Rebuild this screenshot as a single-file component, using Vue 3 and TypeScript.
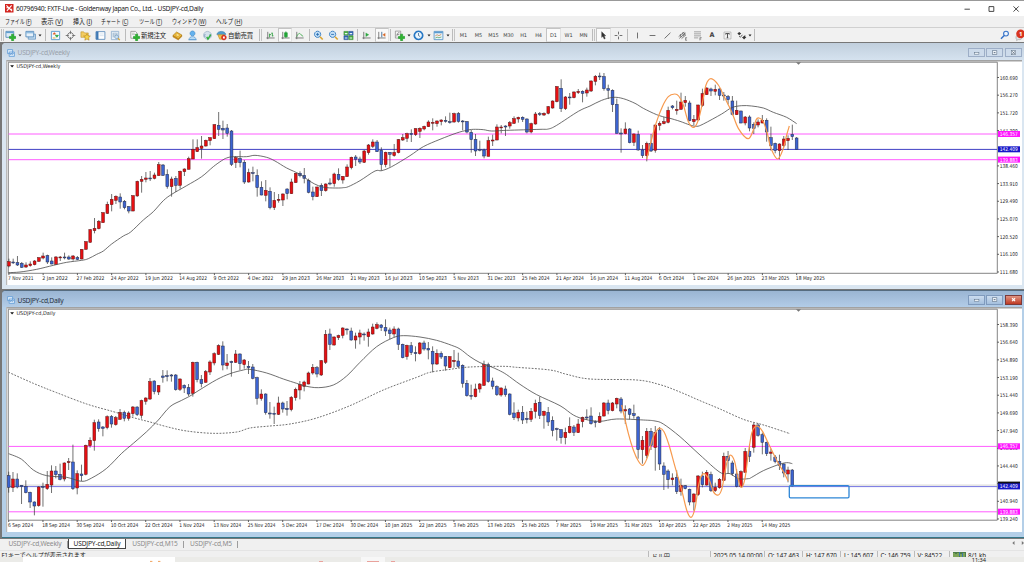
<script setup lang="ts">
type Shape = [d: string, fill: string, stroke?: string, width?: number]
type Point = [number, number]

interface Candle {
  x: number
  up: boolean
  top: number
  height: number
  high: number
  low: number
}

interface Chart {
  id: string
  title: string
  active: boolean
  top: number
  bottom: number
  height: number
  candles: Candle[]
  lines: { y: number; kind: string }[]
  average: string
  slow: string
  wave: string
  prices: { y: number; text: string }[]
  tags: { y: number; text: string; kind: string }[]
  dates: { x: number; text: string; w: number }[]
}

/* Candle rows: colour, body top, body bottom, high, low, in thirds of a pixel below the chart base. */
const weeklyRows = `r575,588,566,592 b576,578,566,582 b578,585,558,588 b580,592,576,594 r585,591,577,594 r582,587,574,590 r573,584,570,586 r563,574,562,575 r558,564,548,568 b557,576,554,582 b573,582,562,583 r561,583,558,584 r561,563,558,573 b561,563,548,568 b561,567,556,570 r558,567,555,572 b563,568,558,570 r538,567,537,568 r515,538,514,539 r479,517,477,518 r475,482,444,490 r454,476,450,478 r428,458,427,458 r403,430,395,432 r388,404,372,424 r379,391,376,402 b381,396,370,416 b394,413,390,418 b410,423,408,430 r377,423,376,424 r334,378,332,380 r328,334,318,368 r324,328,306,337 b324,326,303,333 r315,325,308,328 r284,317,276,317 b285,316,282,318 b313,350,298,356 r327,350,320,380 b325,346,318,366 r304,346,302,356 r297,305,295,318 r266,298,260,298 r238,267,208,267 r233,245,208,246 r228,235,198,266 r211,228,209,230 r203,212,202,226 r164,206,163,207 b166,178,126,198 b175,180,152,207 b174,190,162,200 b183,283,180,288 r263,278,258,294 b265,278,242,292 b277,336,270,342 r308,336,296,338 b308,310,290,334 b316,353,298,380 b352,375,334,376 r361,376,330,394 b364,413,352,418 r391,413,366,420 r388,391,372,398 r372,390,370,408 b357,371,355,388 r336,371,326,372 r310,338,309,338 b310,317,304,322 b316,325,294,340 b331,367,326,370 b366,380,350,391 r351,380,350,381 b346,362,340,378 r342,362,340,365 b339,342,325,346 r312,341,308,350 b313,328,295,332 r319,330,318,341 r291,320,283,320 r262,293,260,298 b261,268,255,288 b267,276,260,282 r243,277,240,279 r225,248,222,254 r216,229,208,234 b216,245,210,246 b241,284,232,302 r247,284,245,292 b247,253,246,290 r247,257,222,260 r209,248,207,250 r203,210,192,213 r191,205,188,216 b190,194,178,216 r176,194,175,198 r175,184,172,204 r169,177,167,181 r156,170,151,171 r157,159,145,181 r153,161,151,170 r150,155,148,166 b151,154,139,158 b155,157,128,161 r131,156,128,158 b131,154,126,158 b153,155,150,181 b155,186,153,190 b187,209,180,248 b208,243,192,258 b238,241,212,244 b240,258,236,265 r212,259,200,259 r210,213,194,228 r171,210,163,211 r171,173,165,190 b168,171,166,198 r158,168,153,176 r146,160,139,162 r142,147,140,158 b142,148,139,156 b147,186,145,190 r161,186,158,190 r132,162,126,164 b131,133,126,138 r130,135,127,138 r110,130,108,133 r93,114,91,116 r50,95,48,97 b55,116,28,126 r81,116,78,120 b81,83,69,104 r66,83,64,85 r64,68,57,72 b64,70,61,97 r60,69,53,80 r33,63,31,66 r19,34,15,46 b18,20,8,30 b20,56,9,62 b56,61,44,87 b61,104,58,126 b103,190,86,191 b189,192,175,248 r177,191,157,193 b177,218,174,220 r192,217,190,228 b193,240,182,242 b240,257,225,264 r220,257,215,274 b220,243,192,246 r165,241,163,248 r160,166,154,181 r155,161,141,163 r121,157,110,160 b108,113,105,118 r118,122,92,134 r96,118,68,119 r91,98,78,110 b99,152,92,154 r148,155,135,166 r105,150,104,151 r71,106,56,110 r54,74,52,75 b57,63,53,78 r58,64,44,76 b57,76,55,90 b75,78,66,92 b80,89,75,103 b93,133,78,136 r121,134,92,135 b123,159,122,160 r141,159,138,166 b141,174,136,184 b163,175,157,192 r156,165,148,172 r151,159,135,160 b151,186,145,215 b203,227,170,242 b220,242,218,250 r222,242,220,268 r207,227,198,232 r205,212,196,240 b193,200,164,210 b204,239,201,240`

const dailyRows = `b557,592,545,608 r567,593,546,606 b567,591,550,595 b586,590,585,642 b590,608,571,610 b607,636,605,654 b636,648,634,676 r591,647,589,650 b590,592,578,650 r583,596,543,600 r543,585,526,609 b543,554,528,565 b553,568,521,571 r519,567,517,574 r515,518,504,540 b516,596,464,600 r551,594,541,613 b552,557,524,573 r466,553,464,556 r451,467,442,473 r398,452,389,482 b396,416,388,425 b411,415,408,439 r380,413,376,418 b380,402,375,413 r383,404,378,407 r367,388,357,389 b367,385,362,394 r369,385,364,392 r351,371,348,380 b351,374,349,378 r332,376,329,386 r324,334,322,344 r275,327,264,330 b273,305,271,313 r287,306,285,315 b258,262,240,278 b257,260,241,274 b255,258,252,275 b255,299,252,302 r267,298,265,303 b286,294,283,309 b293,312,282,318 r217,310,215,320 b217,269,215,277 b269,281,255,292 r245,277,240,278 r216,246,211,255 r191,219,187,226 r167,193,163,195 b168,225,154,241 r219,227,192,238 b215,218,212,260 r192,217,180,219 b192,221,190,240 r210,224,207,236 b229,233,213,252 b231,265,222,268 b263,325,260,344 r312,326,298,332 b312,368,310,374 b369,372,336,386 b370,372,350,402 r339,373,320,375 b339,357,335,368 b355,359,333,377 r322,359,318,364 r298,323,293,332 r284,300,273,328 r276,289,272,304 r249,282,245,283 r232,249,222,254 b233,252,228,262 r212,255,210,258 r133,217,120,222 b132,163,116,180 r141,165,139,167 r137,143,134,150 r114,136,112,145 b117,119,115,134 b123,150,113,152 r138,150,128,176 r129,141,119,163 b132,134,127,152 r126,140,116,170 r111,132,101,134 r104,115,97,118 b105,113,102,123 b113,123,88,138 b120,131,113,148 r117,132,109,142 b117,163,113,180 b163,203,161,205 r166,200,164,209 b167,188,156,195 b188,191,169,214 r159,191,156,194 b159,177,152,182 b175,180,156,208 b184,222,169,247 r190,222,178,225 b190,201,184,207 b200,228,198,242 r200,233,199,234 r211,215,180,233 b213,229,188,234 b226,280,223,293 b280,317,270,320 b316,319,284,329 r297,320,281,322 r282,297,279,308 r224,286,212,288 b224,275,218,278 b273,289,263,298 b290,314,286,318 r294,315,292,320 b297,314,287,320 b312,373,310,376 b369,383,337,390 r367,384,359,394 b367,390,348,402 b385,389,365,400 r364,388,354,396 r340,364,329,385 b337,376,320,387 r364,376,362,416 b367,396,351,408 b391,421,379,439 b416,419,413,452 b419,443,418,461 r427,443,413,463 r409,428,382,430 b411,427,405,438 r402,428,387,429 r382,395,380,412 b381,384,358,390 b378,401,352,404 b395,398,391,412 r379,397,367,399 r339,378,336,380 b339,362,329,373 r339,362,336,364 r325,342,323,355 b327,363,321,370 r359,363,346,402 b357,373,354,388 b371,377,344,386 b381,479,378,506 r451,479,438,521 r424,496,414,505 b424,467,414,480 r427,473,408,542 b420,522,411,540 b528,553,517,600 b543,569,538,596 r564,569,550,586 b563,605,541,612 r586,605,566,617 b587,596,585,598 b598,636,596,646 r612,636,610,662 r558,614,555,618 b558,584,545,592 r547,585,540,587 b554,602,545,606 r592,602,578,606 r568,593,564,596 r499,571,488,573 b499,512,483,552 b519,551,512,558 b552,589,537,592 r545,589,541,592 r484,547,474,548 b484,499,463,516 r405,472,399,488 b405,436,400,440 b434,457,428,493 b457,491,455,498 r486,490,476,512 b501,515,495,520 b515,526,494,540 b522,549,520,562 r540,552,530,577 b540,588,537,589`

function candles(rows: string, base: number, x0: number, step: number): Candle[] {
  return rows.split(' ').map((row, i) => {
    const [a, b, h, l] = row.slice(1).split(',').map((n) => base + Number(n) / 3)
    return { x: x0 + i * step, up: row[0] === 'r', top: a, height: Math.max(b - a, 0.9), high: h, low: l }
  })
}

/* Smooth curve through the points; each segment string is "xOffset|x,y x,y ...". */
function curve(base: number, ...parts: string[]): string {
  const pts: Point[] = parts.flatMap((part) => {
    const [off, list] = part.split('|')
    return list.split(' ').map((p) => {
      const [x, y] = p.split(',').map(Number)
      return [(Number(off) + x) / 3, base + y / 3] as Point
    })
  })
  let d = `M${pts[0][0]} ${pts[0][1]}`
  for (let i = 0; i < pts.length - 1; i++) {
    const p0 = pts[Math.max(i - 1, 0)]
    const p1 = pts[i]
    const p2 = pts[i + 1]
    const p3 = pts[Math.min(i + 2, pts.length - 1)]
    d += `C${p1[0] + (p2[0] - p0[0]) / 6} ${p1[1] + (p2[1] - p0[1]) / 6} ${p2[0] - (p3[0] - p1[0]) / 6} ${p2[1] - (p3[1] - p1[1]) / 6} ${p2[0]} ${p2[1]}`
  }
  return d
}

function prices(list: string, y0: number, step: number) {
  return list.split(' ').map((text, i) => ({ text, y: y0 + i * step })).filter((p) => p.text !== '-')
}

function dates(list: string, x0: number) {
  return list.split(',').map((text, i) => {
    const w = text.length > 10 ? (text.includes('May') ? 29 : 27.8) : 25.4
    return { text, x: x0 + i * 34.25, w }
  })
}

const charts: Chart[] = [
  {
    id: 'weekly',
    title: 'USDJPY-cd,Weekly',
    active: false,
    top: 60,
    bottom: 273.3,
    height: 225,
    candles: candles(weeklyRows, 70, 8.9, 4.281),
    lines: [
      { y: 134, kind: 'magenta' },
      { y: 149.4, kind: 'navy' },
      { y: 159.7, kind: 'magenta' },
    ],
    average: curve(
      70,
      '0|25,608 60,606 110,598 160,586 200,577 245,571 265,566 290,553 310,543 335,522 370,498 392,486 430,450 460,425 490,392 515,373 560,347 605,320 640,290 665,272 680,264 700,260 740,260 765,256 800,262 825,273 860,294 900,313 930,334 955,347 980,353 1015,354',
      '1020|10,353 25,350 60,332 105,303 125,302 155,290 210,257 250,230 300,208 350,189 380,181 400,178 430,179 455,183 500,181 600,178 625,177 650,166 715,124 750,108 785,91 820,82 850,86 885,100 910,115 950,134 980,143',
      '2010|0,145 30,154 60,165 80,169 100,162 155,132 185,113 215,107 245,108 280,114 310,127 350,142 380,161',
    ),
    slow: '',
    wave: curve(
      70,
      '1020|920,268 933,215 948,160 967,110 985,80 1004,72',
      '2010|26,78 40,105 55,155 72,172 85,150 97,100 108,45 123,26 145,45 165,85 185,125 205,175 234,206 250,180 258,150 267,144 280,155 292,190 303,235 323,267 340,235 350,195 358,168',
    ),
    prices: prices('160.690 156.270 151.720 147.300 - 138.460 133.910 129.490 125.070 120.520 116.100 111.680', 77.5, 17.68),
    tags: [
      { y: 134, text: '146.357', kind: 'magenta' },
      { y: 149.3, text: '142.409', kind: 'navy' },
      { y: 159.6, text: '139.883', kind: 'magenta' },
    ],
    dates: dates('7 Nov 2021,2 Jan 2022,27 Feb 2022,24 Apr 2022,19 Jun 2022,14 Aug 2022,9 Oct 2022,4 Dec 2022,29 Jan 2023,26 Mar 2023,21 May 2023,16 Jul 2023,10 Sep 2023,5 Nov 2023,31 Dec 2023,25 Feb 2024,21 Apr 2024,16 Jun 2024,11 Aug 2024,6 Oct 2024,1 Dec 2024,26 Jan 2025,23 Mar 2025,18 May 2025', 8.9),
  },
  {
    id: 'daily',
    title: 'USDJPY-cd,Daily',
    active: true,
    top: 307,
    bottom: 520.2,
    height: 225,
    candles: candles(dailyRows, 290, 8.7, 4.282),
    lines: [
      { y: 446.4, kind: 'magenta' },
      { y: 485.1, kind: 'bid' },
      { y: 486.6, kind: 'periwinkle' },
      { y: 511.8, kind: 'magenta' },
    ],
    average: curve(
      290,
      '0|26,491 65,508 100,540 140,557 200,562 245,574 275,564 320,535 365,490 400,460 440,425 475,390 510,350 545,331 570,318 600,299 650,269 690,251 730,240',
      '750|0,238 50,249 100,267 140,280 165,288 205,293 250,285 290,258 330,217 380,170 430,143 460,137 510,141 560,151 605,166 630,177 660,200 690,218 720,229 745,240',
      '1500|20,254 60,283 110,314 180,347 220,375 255,388 300,394 350,387 430,390 465,393 490,402 540,440 600,495 660,547 690,551 715,566 745,566',
      '2250|5,562 40,542 85,524 110,518 127,521',
    ),
    slow: curve(
      290,
      '0|26,247 100,280 170,308 260,342 340,365 400,383 450,396 500,410 560,423 640,430 710,426',
      '750|0,414 60,408 120,402 200,384 300,347 400,300 500,262 540,247 600,238 660,231 760,229',
      '1500|50,232 150,240 200,253 270,267 410,270 480,284 540,306 600,332 660,357 730,388',
      '2250|30,402 60,411 120,431',
    ),
    wave: curve(
      290,
      '1500|365,345 385,430 400,480 415,513 429,526 443,500 458,445 470,422 479,414 492,425 507,465 525,530 545,600 560,660 573,682 585,655 595,590 603,560 613,551 628,570 640,605 655,615 666,595 675,545 684,505 693,496 704,515 714,565 724,592 735,565 745,490 755,430 765,410',
      '2250|26,410 38,425 60,470 85,520 102,548 114,572',
    ),
    prices: prices('158.390 156.640 154.890 153.190 151.440 149.690 147.940 146.190 144.440 142.740 140.940 139.240', 324.5, 17.68),
    tags: [
      { y: 484.6, text: '', kind: 'black' },
      { y: 446.3, text: '146.357', kind: 'magenta' },
      { y: 486.4, text: '142.409', kind: 'navy' },
      { y: 511.7, text: '139.883', kind: 'magenta' },
    ],
    dates: dates('6 Sep 2024,18 Sep 2024,30 Sep 2024,10 Oct 2024,22 Oct 2024,1 Nov 2024,13 Nov 2024,25 Nov 2024,5 Dec 2024,17 Dec 2024,30 Dec 2024,10 Jan 2025,22 Jan 2025,3 Feb 2025,13 Feb 2025,25 Feb 2025,7 Mar 2025,19 Mar 2025,31 Mar 2025,10 Apr 2025,22 Apr 2025,2 May 2025,14 May 2025', 8.7),
  },
]

const G = '#555'
const axes = 'M3 2v8M1.5 8.7h9'
const plus = 'M7.2 4.6h2.2v2.4h2.3v2.2H9.4v2.4H7.2V9.2H4.9V7h2.3z'
const icons: Record<string, Shape[]> = {
  newChart: [['M1 1.5h8.5v6.5H1z', '#dcebf7', '#4c86b8', 0.9], ['M1.2 2.8h8', 'none', '#5f9fd0', 1.2], [plus, '#2fb52f', '#1f9a2a', 0.7]],
  profiles: [['M3.5 4.5h8v5.5h-8z', '#c4dcf0', '#5b8fbd', 0.8], ['M1 1.5h8.5v6H1z', '#e6f1fa', '#4c86b8', 0.9], ['M1.2 3h8', 'none', '#7db0da', 1.2]],
  market: [['M1.5 1.5h9v9h-9z', '#f4f9fd', '#5c9bcf', 1], ['M3.2 4.5l1.5-1.8 1.5 1.8z', '#e2571f', '#e2571f', 0.5], ['M5.8 5.8h3.4L7.5 8z', '#25a53a', '#25a53a', 0.7], ['M3 8.7h3', 'none', '#e2a01f', 0.9]],
  target: [['M6 2.8a3.2 3.2 0 1 0 .01 0z', 'none', '#666', 0.9], ['M6 .8v3.4M6 7.8v3.4M.8 6h3.4M7.8 6h3.4', 'none', '#666', 0.9]],
  favorites: [['M1 2h3l1 1.2h4V8H1z', '#f3cc62', '#b98b21', 0.6], ['M7.6 4l1.1 2.3 2.6.3-1.9 1.8.5 2.7-2.3-1.3-2.3 1.3.5-2.7-1.9-1.8 2.6-.3z', '#f6d34a', '#b27d14', 0.6]],
  navigator: [['M1.2 1.8h9.6v8.4H1.2z', '#fff', '#5486b8', 0.9], ['M1.3 2h2.2v8H1.3z', '#3f7ab5', '#3f7ab5', 0.5], ['M5 4.3h4.5M5 6.2h4.5', 'none', '#b9cfe4', 0.6]],
  tester: [['M1.5 1.5h8v9h-8z', '#eaf2f9', '#86a9c9', 0.8], ['M3.5 3v5M5.5 2.8v4M7.5 3v3', 'none', '#7a99b8', 0.8], ['M7.2 5.5a2 2 0 1 0 .01 0z', '#c9e3f6', '#6d8faf', 0.8], ['M8.7 9l2 2', 'none', '#d8a73a', 1.3]],
  order: [['M2 1.5h5l1.8 1.8V9H2z', '#fafafa', '#888', 0.8], ['M3.3 3.5h3M3.3 5h3.8', 'none', '#999', 0.6], [plus, '#2fb52f', '#1f9a2a', 0.7]],
  gold: [['M1 6l4-3.8 5.8 3.3L7 10z', '#edbb3a', '#a87514', 0.7], ['M3.5 5.5l2.5-1.6 2.5 1.5-2 1.8z', '#fbe18c', '#c58d1d', 0.5], ['M1 6v1.5l5.8 3.4 4-3.8V5.6L7 9.5z', '#c98d1f', '#a87514', 0.4]],
  cloud: [['M6 1a2.7 2.7 0 1 0 .01 0z', '#64b2ee', '#2f7dc1', 0.6], ['M2.2 10.5c0-4.4 7.6-4.4 7.6 0z', '#b7dbf6', '#3d86c7', 0.6], ['M1.5 10.6h9', 'none', '#5c9dd4', 0.9]],
  signal: [['M6 1.5a4.3 4.3 0 1 0 .01 0z', '#d5e1ec', '#90a8bf', 0.7], ['M3.4 4.4a3.5 3.5 0 0 0 0 3.6M8.6 4.4a3.5 3.5 0 0 1 0 3.6', 'none', '#6b8db0', 0.8], ['M5.2 7.5l1.3 2.5 3-5', 'none', '#2eaf3c', 1.5]],
  robot: [['M1 5c0-4.6 9.6-4.6 9.6 0z', '#4f9ccc', '#2d74a3', 0.6], ['M2 5.3h7L7 10H4z', '#f2c14a', '#b68321', 0.6], ['M8.6 5.5a2.7 2.7 0 1 0 .01 0z', '#e0301e', '#b51f12', 0.4], ['M7.6 7.2h2v2h-2z', '#fff']],
  bars: [[axes, 'none', G, 0.8], ['M5 4v4M5 5h1.5M8 3v4M6.8 3.5H8M8 6.3h1.2', 'none', '#249a38', 0.9]],
  candle: [[axes, 'none', G, 0.8], ['M5 3h2.9v4.4H5z', '#26b53b', '#1c9430', 0.7], ['M6.4 1.5v7', 'none', '#1c9430', 0.8]],
  line: [[axes, 'none', G, 0.8], ['M3 7.3c2-4.6 3.4-4 4.6-2.2L10 7', 'none', '#39a845', 0.9]],
  zoomIn: [['M5 1.3a3.4 3.4 0 1 0 .01 0z', '#c4e0f7', '#3b80c4', 1], ['M5 3.2v3.2M3.4 4.8h3.2', 'none', '#2267ac', 0.9], ['M7.6 7.4l3 3', 'none', '#dba633', 1.8]],
  zoomOut: [['M5 1.3a3.4 3.4 0 1 0 .01 0z', '#c4e0f7', '#3b80c4', 1], ['M3.4 4.8h3.2', 'none', '#2267ac', 0.9], ['M7.6 7.4l3 3', 'none', '#dba633', 1.8]],
  tiles: [['M1 1.5h4.7v4.2H1z', '#4bb144', '#2b7e2a', 0.5], ['M6.3 1.5H11v4.2H6.3z', '#3569b8', '#204a89', 0.5], ['M1 6.3h4.7v4.2H1z', '#3569b8', '#204a89', 0.5], ['M6.3 6.3H11v4.2H6.3z', '#4bb144', '#2b7e2a', 0.5], ['M2 3.9h2.8M7.2 3.9H10M2 8.8h2.8M7.2 8.8H10', 'none', '#e6f3f1', 1.2]],
  scroll: [[axes, 'none', G, 0.8], ['M5.3 3.2v4L8.5 5.2z', '#2aa53d', '#2aa53d', 0.4]],
  shift: [[axes, 'none', G, 0.8], ['M6.3 2v6', 'none', '#41719e', 1], ['M10 3.5v3.6L7.3 5.3z', '#d86a2a', '#d86a2a', 0.3]],
  indicators: [['M1.5 1.2h5.8v7.6H1.5z', '#f4f4f4', '#888', 0.8], ['M3 7c.8-4 1.8-4.5 3-4M3 4.8h2.8', 'none', '#666', 0.7], [plus, '#2fb52f', '#1f9a2a', 0.7]],
  clock: [['M6 1.4a4.5 4.5 0 1 0 .01 0z', '#eaf5fd', '#2777c4', 1.8], ['M6 3.3V6l1.8 1.2', 'none', '#31567d', 0.8]],
  template: [['M1.2 1.5h9.6v9H1.2z', '#eaf3fa', '#5492c6', 0.9], ['M1.3 2.7h9.4', 'none', '#5b9bd0', 1.7], ['M2.5 6.4l2-1.2 2 1 2.5-1.4', 'none', '#c47a3a', 0.8], ['M2.5 8.8l2-1 2 .7L9.2 7.6', 'none', '#4ea157', 0.8]],
  cursor: [['M4 1.8l4.5 4.6H6.7l1.2 2.9-1.2.6-1.3-3-1.4 1.2z', '#333', '#333', 0.4]],
  cross: [['M6 1.8v3M6 7.2v3M1.8 6h3M7.2 6h3', 'none', '#555', 0.9]],
  vline: [['M6 2.8v6.4', 'none', '#555', 0.9]],
  hline: [['M2.8 6h6.4', 'none', '#555', 0.9]],
  trend: [['M2.8 9.2l6.4-6.2', 'none', '#555', 0.9]],
  channel: [['M1.8 7.2l6-5M2.5 9.2l7-6M5 9.4l4.8-4.2M3.6 4.5l.8 3.4M6.2 2.7l.8 4M8 2.8l.6 3', 'none', '#555', 0.8], ['M11 8.3H9.3v3H11M9.3 9.8h1.4', 'none', '#555', 0.6]],
  fibo: [['M2.2 2h7.6M2.2 4.2h7.6M2.2 6.4h7.6M2.2 8.6h4.6', 'none', '#777', 0.7], ['M10.6 8.3H8.6v3M8.6 9.8h1.5', 'none', '#555', 0.6]],
  label: [['M2.2 2.2h7.6v7.6H2.2z', 'none', '#999', 0.6], ['M4 3.9h4v1M4 3.9v1M6 3.9v4.5M5.2 8.4h1.6', 'none', '#444', 1]],
  arrows: [['M3.5 2.2l2.2 1.7-2.2 1.7-2-1.7zM8 6.8l2.2-1v1.8h1.2L8.8 10.4 6.4 7.6H8z', '#333'], ['M3.3 6.5l1.5 1.4L7 5.2', 'none', '#444', 0.9]],
}

interface Tool {
  w: number
  kind: 'icon' | 'caret' | 'sep' | 'grip' | 'text' | 'cap' | 'letter'
  name?: string
  on?: boolean
}

const tools: Tool[] = `grip 4;icon 13 newChart;caret 5;icon 16 profiles;caret 4;sep 6;icon 15 market;icon 15 target;icon 15 favorites;icon 15 navigator;icon 15 tester;sep 4;icon 14 order;cap 28.5 新規注文;icon 15 gold;icon 15 cloud;icon 15 signal;icon 13.5 robot;cap 30 自動売買;grip 5;icon 15 bars;icon 14 candle on;icon 15 line;sep 4;icon 15 zoomIn;icon 15 zoomOut;icon 15 tiles;sep 3;icon 15.5 scroll;icon 14.5 shift on;sep 3;icon 14 indicators;caret 5;icon 15 clock;caret 5;icon 15 template;caret 4;grip 6;text 15 M1;text 15 M5;text 15 M15;text 15 M30;text 15 H1;text 15 H4;text 15 D1 on;text 15 W1;text 15 MN;grip 5;icon 15 cursor on;icon 15 cross;sep 3.5;icon 15 vline;icon 15 hline;icon 15 trend;icon 15 channel;icon 15 fibo;letter 15 A;icon 15 label;icon 13.5 arrows;caret 4;sep 5`
  .split(';')
  .map((entry) => {
    const [kind, w, name, on] = entry.split(' ')
    return { kind: kind as Tool['kind'], w: Number(w), name, on: on === 'on' }
  })

/* w is the slot in the bar, len the drawn length of the condensed label. */
const menus = [
  { text: 'ファイル', key: 'F', w: 36.3, len: 26.5 },
  { text: '表示', key: 'V', w: 32, len: 22 },
  { text: '挿入', key: 'I', w: 28.5, len: 19 },
  { text: 'チャート', key: 'C', w: 37.2, len: 27.3 },
  { text: 'ツール', key: 'T', w: 33, len: 23 },
  { text: 'ウィンドウ', key: 'W', w: 44, len: 34.3 },
  { text: 'ヘルプ', key: 'H', w: 30, len: 26.3 },
]

const tabs = [
  { text: 'USDJPY-cd,Weekly', w: 66, on: false },
  { text: 'USDJPY-cd,Daily', w: 58, on: true },
  { text: 'USDJPY-cd,M15', w: 58, on: false },
  { text: 'USDJPY-cd,M5', w: 54, on: false },
]

const status = [
  { text: 'ドル円', w: 62 },
  { text: '2025.05.14 00:00', w: 54.5 },
  { text: 'O: 147.463', w: 38 },
  { text: 'H: 147.670', w: 38 },
  { text: 'L: 145.607', w: 36.5 },
  { text: 'C: 146.759', w: 37 },
  { text: 'V: 84522', w: 35.5 },
]
</script>

<template>
  <div class="terminal">
    <header class="titlebar">
      <svg class="logo" viewBox="0 0 9 9">
        <rect width="9" height="9" fill="#d3241f" />
        <path d="M1.5 1.5l6 6M7 1.5L2 7.2M1.5 4h2.2M5.6 5.5h2" stroke="#fff" stroke-width="1.2" fill="none" />
      </svg>
      <span class="app-title">60796940: FXTF-Live - Goldenway Japan Co., Ltd. - USDJPY-cd,Daily</span>
      <svg class="controls" viewBox="0 0 64 12">
        <path d="M4.5 6.2h5.4M29 3.6h4.8v4.8H29zM53.5 3.4l5.2 5.2M58.7 3.4l-5.2 5.2" fill="none" stroke="#333" stroke-width=".9" />
      </svg>
    </header>

    <nav class="menubar">
      <svg v-for="m in menus" :key="m.key" class="menu" :viewBox="`0 0 ${m.w} 11`" :style="{ width: m.w + 'px' }">
        <text x="0" y="8" :textLength="m.len" lengthAdjust="spacingAndGlyphs">{{ m.text }} (<tspan class="key">{{ m.key }}</tspan>)</text>
      </svg>
    </nav>

    <div class="toolbar">
      <div v-for="(t, i) in tools" :key="i" class="tool" :class="[t.kind, { on: t.on }]" :style="{ width: t.w + 'px' }">
        <svg v-if="t.kind === 'icon'" class="glyph" viewBox="0 0 12 12">
          <path v-for="(s, j) in icons[t.name ?? '']" :key="j" :d="s[0]" :fill="s[1]" :stroke="s[2] ?? 'none'" :stroke-width="s[3] ?? 0" />
        </svg>
        <svg v-else-if="t.kind === 'caret'" class="caret-glyph" viewBox="0 0 4 3"><path d="M.5 .5h3L2 2.4z" fill="#222" /></svg>
        <template v-else>{{ t.name }}</template>
      </div>
      <svg class="alerts" viewBox="0 0 28 14">
        <circle cx="10" cy="5.6" r="2.4" fill="#eef5fd" stroke="#3672c8" stroke-width="1.1" />
        <path d="M8.2 7.5L5 10.8" stroke="#3672c8" stroke-width="1.5" />
        <path d="M20 9.2c0-3 6-3 6 0s-3 2.4-4 2.4l-1.4 1v-1.2q-.6-.6-.6-2.2z" fill="#e2e2e2" stroke="#999" stroke-width=".6" />
        <circle cx="24.6" cy="5.8" r="4.4" fill="#d8341f" />
        <text x="24.6" y="8.1" text-anchor="middle" class="badge">1</text>
      </svg>
    </div>

    <main class="workspace">
      <section v-for="c in charts" :key="c.id" class="window" :class="{ active: c.active }">
        <div class="caption">
          <svg class="chart-icon" viewBox="0 0 8 8">
            <path d="M.6.6h5v4h-5zM2.2 3h5.2v4.4H2.2z" fill="#dcecfb" stroke="#5f9ad6" stroke-width=".8" />
            <path d="M3 6l1.2-1.3L5.3 5.7 6.8 4.2" fill="none" stroke="#4b86c4" stroke-width=".6" />
          </svg>
          <span class="caption-text">{{ c.title }}</span>
          <span class="btn"><svg viewBox="0 0 16 9"><rect x="5.3" y="4.2" width="5.6" height="2" fill="#f6f9fc" stroke="#556a80" stroke-width=".6" /></svg></span>
          <span class="btn"><svg viewBox="0 0 16 9"><rect x="5.4" y="2.1" width="5.4" height="4.6" fill="#f6f9fc" stroke="#556a80" stroke-width=".7" /><rect x="7" y="3.8" width="2.2" height="1.2" fill="#556a80" /></svg></span>
          <span class="btn close"><svg viewBox="0 0 16 9"><rect v-if="!c.active" x="5.6" y="2" width="5" height="4.9" fill="#f3f6fa" stroke="#56697d" stroke-width=".6" /><path d="M6.3 2.7l3.6 3.5M9.9 2.7L6.3 6.2" :stroke="c.active ? '#fff' : '#56697d'" :stroke-width="c.active ? 1.4 : 0.9" /></svg></span>
        </div>

        <svg class="plot" :viewBox="`6 ${c.top} 1016 ${c.height}`">
          <rect x="6" :y="c.top" width="1016" :height="c.height" fill="#fff" />
          <path :d="`M6 ${c.top + 0.7}H1022`" stroke="#a2a2a2" stroke-width="1.4" />
          <path :d="`M6.6 ${c.top}v${c.height}`" stroke="#b9b9b9" stroke-width="1.2" />
          <path :d="`M8.3 ${c.top + 2.2}H997.3V${c.bottom}H8.3z`" class="frame" />
          <path :d="`M796 ${c.top + 2.2}h5l-2.5 2.6z`" fill="#777" />

          <path v-for="(l, i) in c.lines" :key="'l' + i" :d="`M8.6 ${l.y}H997`" class="level" :class="l.kind" />
          <g v-for="(k, i) in c.candles" :key="'k' + i">
            <path :d="`M${k.x} ${k.high}V${k.low}`" class="wick" />
            <rect :x="k.x - 1.4" :y="k.top" width="2.8" :height="k.height" class="body" :class="{ up: k.up }" />
          </g>
          <path :d="c.average" class="average" />
          <path v-if="c.slow" :d="c.slow" class="average slow" />
          <path :d="c.wave" class="wave" />
          <rect v-if="c.active" x="789.3" y="485.6" width="59.7" height="12.2" rx="1.2" class="zone" />

          <path :d="`M10.2 ${c.top + 5.2}h3.8l-1.9 2.4z`" fill="#111" />
          <text x="16.5" :y="c.top + 8.3" class="axis" :textLength="c.active ? 39 : 44" lengthAdjust="spacingAndGlyphs">{{ c.title }}</text>

          <g v-for="p in c.prices" :key="p.text">
            <path :d="`M997.3 ${p.y}h1.7`" stroke="#333" stroke-width=".8" />
            <text x="999.8" :y="p.y + 2" class="axis" textLength="18" lengthAdjust="spacingAndGlyphs">{{ p.text }}</text>
          </g>
          <g v-for="(t, i) in c.tags" :key="'t' + i">
            <rect x="998" :y="t.y - 3" width="22" height="6" class="tag" :class="t.kind" />
            <text v-if="t.text" x="999.8" :y="t.y + 2" class="axis tag-text" textLength="18" lengthAdjust="spacingAndGlyphs">{{ t.text }}</text>
          </g>
          <g v-for="d in c.dates" :key="d.text">
            <path :d="`M${d.x} ${c.bottom}v1.8`" stroke="#333" stroke-width=".8" />
            <text :x="d.x - 0.8" :y="c.bottom + 7.1" class="axis" :textLength="d.w" lengthAdjust="spacingAndGlyphs">{{ d.text }}</text>
          </g>
        </svg>
      </section>
    </main>

    <div class="tabs">
      <span v-for="t in tabs" :key="t.text" class="tab" :class="{ on: t.on }" :style="{ width: t.w + 'px' }">{{ t.text }}</span>
      <svg class="scroller" viewBox="0 0 14 6"><path d="M3.5 1v4L1.3 3zM10.8 1v4L13 3z" fill="#777" /></svg>
    </div>

    <footer class="status">
      <span class="help">F1キーでヘルプが表示されます</span>
      <span v-for="s in status" :key="s.text" class="cell" :style="{ width: s.w + 'px' }">{{ s.text }}</span>
      <span class="cell traffic">
        <svg viewBox="0 0 13 6"><rect width="13" height="6" fill="#4d7d49" /><path d="M1 1v5M3 2v4M5 1v5M8 2v4M11 1v5" stroke="#b5d36b" stroke-width=".9" /><path d="M6.5 0v4M9.5 1v4" stroke="#3d77b3" stroke-width=".9" /></svg>
        8/1 kb
      </span>
    </footer>

    <div class="taskbar">
      <div class="search"><svg viewBox="0 0 14 2"><path d="M1 1.4h2.4M9 1.4h2.4" stroke="#f0a45e" stroke-width="1" /></svg></div>
      <div class="apps"><i></i><i class="wide"></i><i></i></div>
      <div class="time">11:34</div>
    </div>
  </div>
</template>

<style>
body {
  margin: 0;
  overflow: hidden;
}
</style>

<style scoped>
.terminal {
  width: 1024px;
  height: 562px;
  display: flex;
  flex-direction: column;
  overflow: hidden;
  background: #f0f0f0;
  font-family: 'Noto Sans', 'Noto Sans CJK JP', sans-serif;
  color: #222;
}
.terminal > * {
  flex: none;
  box-sizing: border-box;
}
svg {
  display: block;
}
.titlebar {
  height: 16px;
  background: #fff;
  border-top: 1px solid #999;
  display: flex;
  align-items: center;
  padding-left: 5px;
}
.logo {
  width: 8.5px;
  height: 8.5px;
}
.app-title {
  margin-left: 2.5px;
  font-size: 6.7px;
  letter-spacing: -0.29px;
  white-space: nowrap;
}
.controls {
  width: 64px;
  height: 12px;
  margin-left: auto;
  margin-right: 0.5px;
}
.menubar {
  height: 12px;
  display: flex;
  align-items: center;
  padding-left: 4.7px;
  border-bottom: 1px solid #d0d0d0;
}
.menu {
  flex: none;
  height: 11px;
  font: 6.6px 'Noto Sans', 'Noto Sans CJK JP', sans-serif;
  fill: #222;
}
.key {
  text-decoration: underline;
  text-decoration-thickness: 0.5px;
}
.toolbar {
  height: 15px;
  display: flex;
  align-items: stretch;
  border-bottom: 1.5px solid #777;
  background: #f1f1f1;
}
.tool {
  flex: none;
  display: flex;
  align-items: center;
  justify-content: center;
  box-sizing: border-box;
  white-space: nowrap;
  font: 5px 'DejaVu Sans', sans-serif;
  letter-spacing: -0.1px;
  color: #444;
}
.letter {
  font: bold 6.4px 'DejaVu Sans', sans-serif;
}
.glyph {
  flex: none;
  width: 11px;
  height: 11px;
}
.caret-glyph {
  width: 4px;
  height: 3px;
}
.sep {
  background: linear-gradient(#bbb, #bbb) center / 1px 12px no-repeat;
}
.grip {
  background: linear-gradient(90deg, #bbb 1px, transparent 1px 2px, #c4c4c4 2px) center / 3px 12px no-repeat;
}
.cap {
  justify-content: flex-start;
  font: 6.4px 'Noto Sans CJK JP', sans-serif;
  color: #222;
}
.tool.on {
  background: #fafafa;
  border: 1px solid #c4c4c4;
  border-right-color: #e2e2e2;
  border-bottom-color: #e2e2e2;
}
.alerts {
  width: 28px;
  height: 14px;
  margin-left: auto;
}
.badge {
  font: bold 6px 'Noto Sans', sans-serif;
  fill: #fff;
}
.workspace {
  height: 495px;
  background: #777;
  padding-left: 2px;
}
.window {
  box-sizing: border-box;
  height: 246px;
  display: flex;
  flex-direction: column;
  padding: 0 2px 0 4px;
  background: #dae6f1;
  border-radius: 4px 0 0 0;
}
.window.active {
  height: 248px;
  margin-top: 1px;
  background: #b4cfe8;
  border-top: 1px solid #566c80;
  border-bottom: 1.5px solid #347688;
}
.caption {
  flex: none;
  height: 17px;
  margin: 0 -2px 0 -4px;
  padding: 2px 1px 0 5px;
  box-sizing: border-box;
  display: flex;
  align-items: center;
  background: linear-gradient(#c1cfdd, #d5e2ef);
  border-radius: 4px 0 0 0;
}
.active .caption {
  height: 16px;
  background: linear-gradient(#9ab5d3, #b2cce7);
}
.chart-icon {
  width: 8px;
  height: 8px;
}
.caption-text {
  flex: 1;
  margin-left: 2.5px;
  font-size: 6.7px;
  letter-spacing: -0.26px;
  color: #9aa2ab;
}
.active .caption-text {
  color: #27313d;
}
.btn {
  width: 17px;
  height: 9.5px;
  box-sizing: border-box;
  margin-right: 1.5px;
  border: 0.8px solid #9daec7;
  background: #cddbeb;
}
.btn svg {
  width: 100%;
  height: 100%;
}
.active .btn {
  border-color: #7f9abd;
  background: linear-gradient(#cbdcef, #a4bfdd);
}
.active .close {
  border-color: #7b3a3a;
  background: linear-gradient(#e09482, #bf3a24);
}
.plot {
  flex: none;
  width: 1016px;
  height: 225px;
}
.frame {
  fill: none;
  stroke: #777;
  stroke-width: 0.9;
}
.axis {
  font: 5.3px 'DejaVu Sans Condensed', 'DejaVu Sans', sans-serif;
  fill: #1d1d1d;
}
.level {
  fill: none;
  stroke-width: 1;
}
.level.magenta {
  stroke: #ff5cff;
}
.level.navy {
  stroke: #4040c4;
}
.level.periwinkle {
  stroke: #7474e2;
}
.level.bid {
  stroke: #d4d4d4;
}
.wick {
  stroke: #333;
  stroke-width: 0.7;
}
.body {
  fill: #3c64d2;
  stroke: #262c48;
  stroke-width: 0.5;
}
.body.up {
  fill: #e60f12;
  stroke: #5c1414;
}
.average {
  fill: none;
  stroke: #4a4a4a;
  stroke-width: 0.8;
}
.slow {
  stroke-dasharray: 1.8 1.4;
}
.wave {
  fill: none;
  stroke: #f79a4e;
  stroke-width: 1.2;
}
.zone {
  fill: none;
  stroke: #2e86d6;
  stroke-width: 1.3;
}
.tag.magenta {
  fill: #ff14ff;
}
.tag.navy {
  fill: #1616c8;
}
.tag.black {
  fill: #111;
}
.tag-text {
  fill: #fff;
}
.tabs {
  height: 12px;
  display: flex;
  align-items: flex-start;
  padding-left: 2px;
  border-top: 1px solid #777;
  background: #f0f0f0;
}
.tab {
  flex: none;
  box-sizing: border-box;
  height: 10px;
  text-align: center;
  font-size: 6.6px;
  line-height: 9.5px;
  letter-spacing: -0.15px;
  color: #8c8c8c;
  white-space: nowrap;
}
.tab:not(.on) {
  background: linear-gradient(#888, #888) right center / 0.8px 7px no-repeat;
}
.tab.on {
  background: #fff;
  color: #222;
  border: 1px solid #444;
  border-top: 0;
}
.scroller {
  width: 14px;
  height: 6px;
  margin: 1px -1px 0 auto;
}
.status {
  height: 7px;
  display: flex;
  align-items: flex-start;
  padding-left: 1.5px;
  overflow: hidden;
  border-top: 1px solid #e4e4e4;
  font-size: 6.2px;
  line-height: 9.5px;
}
.help {
  width: 646px;
  font: 6px 'Noto Sans', 'Noto Sans CJK JP', sans-serif;
  line-height: 9.5px;
}
.cell {
  flex: none;
  box-sizing: border-box;
  height: 9px;
  padding-left: 3px;
  border-left: 0.8px solid #bbb;
  white-space: nowrap;
}
.traffic {
  display: flex;
  gap: 2px;
}
.traffic svg {
  width: 13px;
  height: 6px;
  margin-top: 1px;
}
.taskbar {
  height: 5px;
  display: flex;
  background: #ebebe8;
  overflow: hidden;
}
.search {
  width: 152px;
  margin-left: 23px;
  background: #fff;
  display: flex;
  align-items: flex-end;
}
.search svg {
  width: 14px;
  height: 2px;
  margin-left: 126px;
}
.apps {
  display: flex;
  align-items: flex-end;
  margin-left: 144px;
}
.apps i {
  width: 4px;
  height: 1px;
  background: #e9a29c;
}
.apps .wide {
  width: 12px;
  margin: 0 12px 0 44px;
  outline: 6px solid #f7f7f7;
}
.time {
  margin-left: auto;
  margin-right: 38px;
  font-size: 5.6px;
  line-height: 7px;
}
</style>
